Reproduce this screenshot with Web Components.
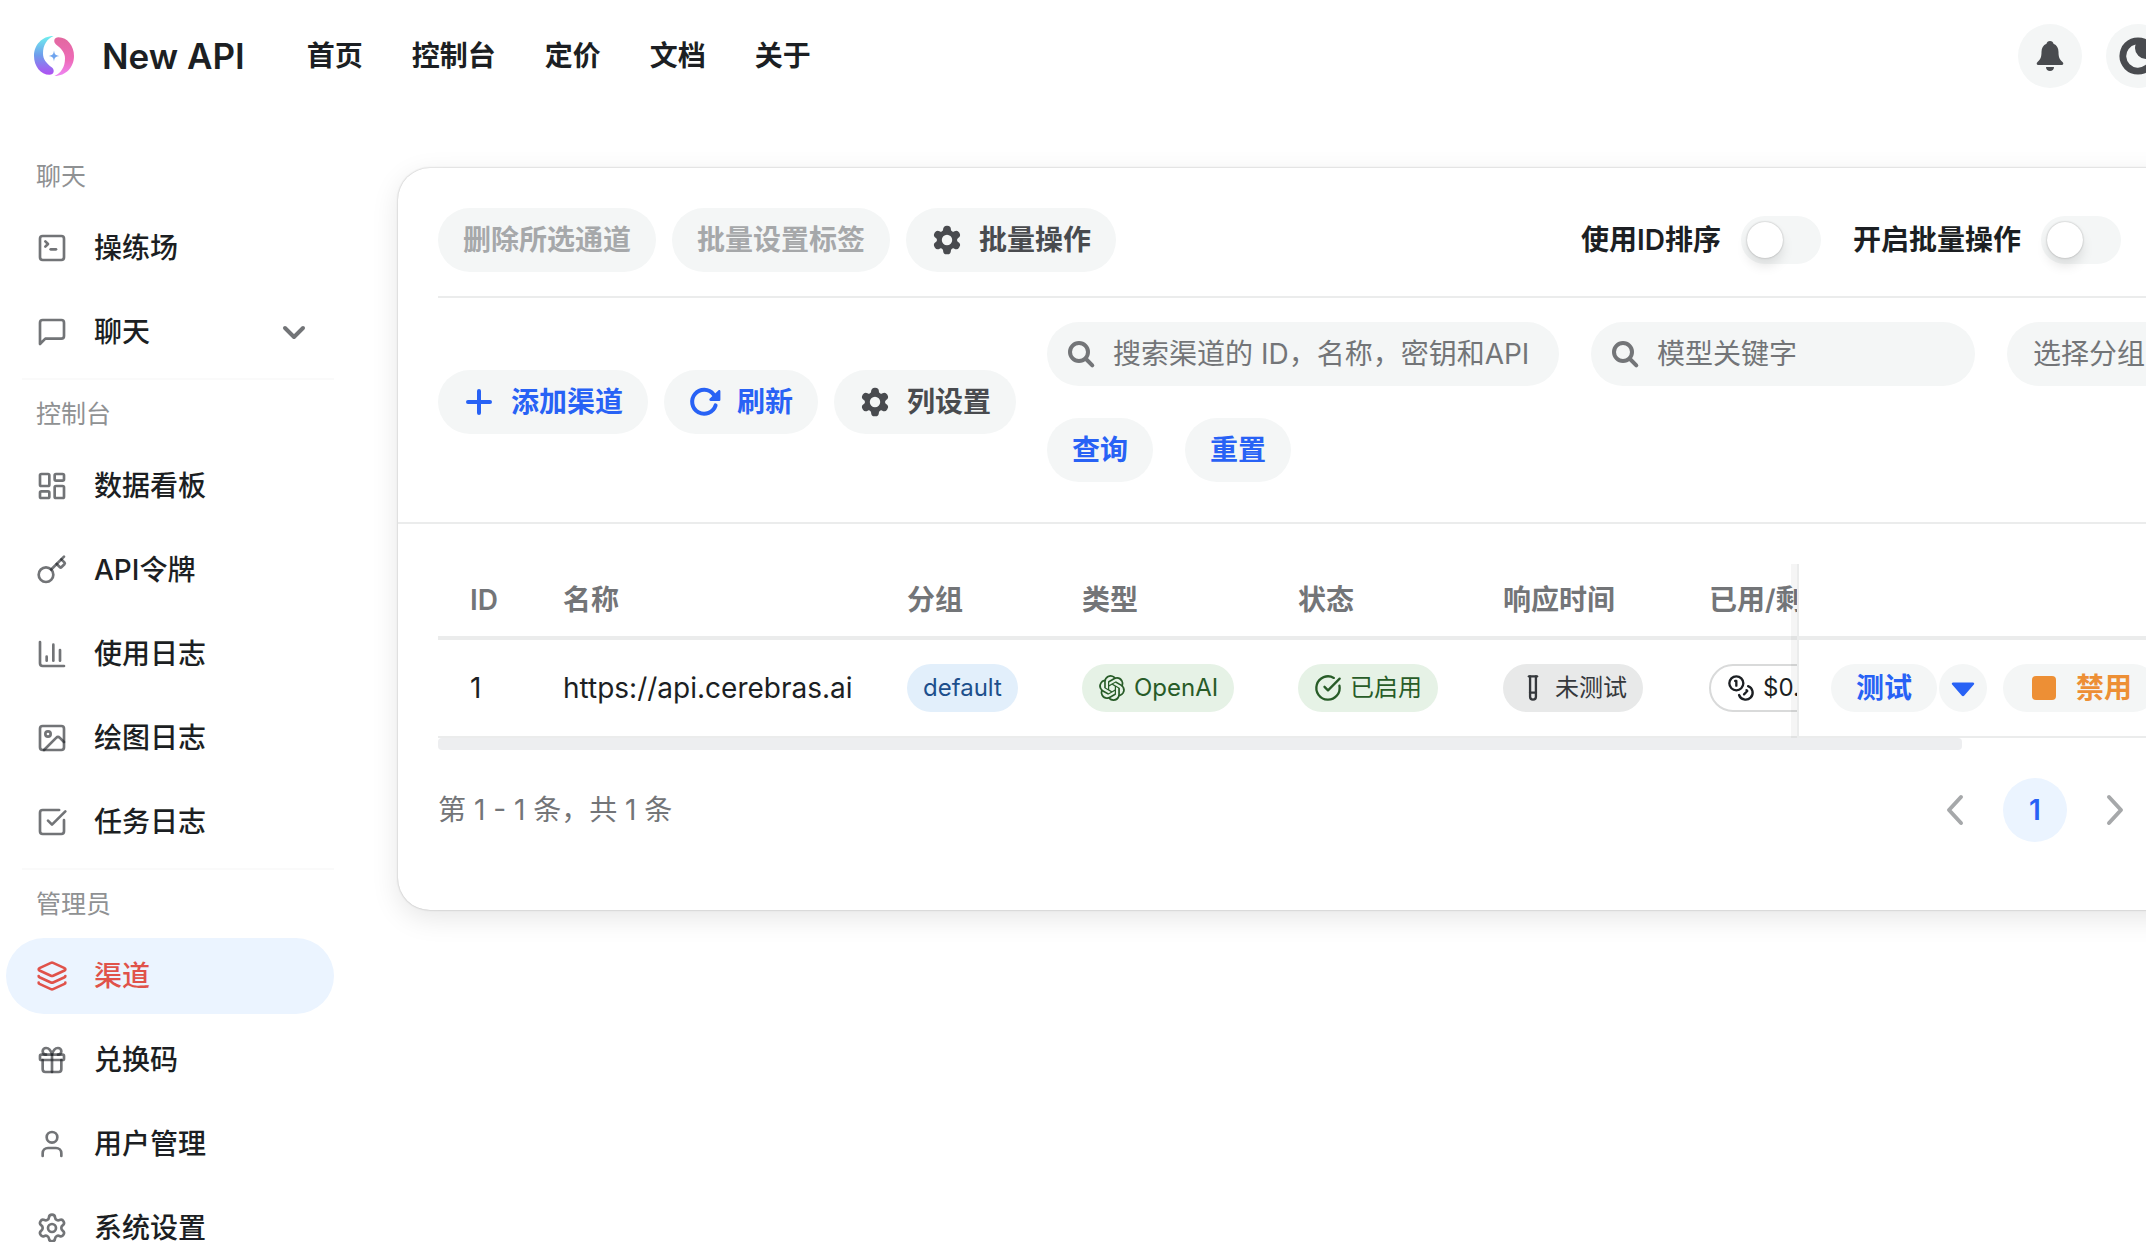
<!DOCTYPE html>
<html lang="zh-CN">
<head>
<meta charset="utf-8">
<title>New API</title>
<style>
html, body {
	margin: 0;
	height: 100%;
	overflow: hidden;
}
body {
	--text-0: #1c1f23;
	--text-1: #494b4f;
	--text-2: #737578;
	--text-3: #a6a8aa;
	--primary: #2862f5;
	--primary-light: #ebf4ff;
	--danger: #e0524a;
	--warning: #ed8f35;
	--fill: #f4f6f6;
	--line: #ebecec;
	font-family: Inter, "Noto Sans CJK SC", sans-serif;
	font-size: 28px;
	line-height: 40px;
	color: var(--text-0);
	background: #fff;
}
</style>
</head>
<body>
<app-root></app-root>

<script>
// ---------- icons ----------
const line = (body) => `<svg viewBox="0 0 24 24" fill="none" stroke="currentColor" stroke-width="2" stroke-linecap="round" stroke-linejoin="round">${body}</svg>`
const solid = (body, box = "0 0 32 32") => `<svg viewBox="${box}" fill="currentColor">${body}</svg>`

const ICONS = {
  terminal: line('<path d="m7 11 2-2-2-2"/><path d="M11 13h4"/><rect x="3" y="3" width="18" height="18" rx="2"/>'),
  message: line('<path d="M21 15a2 2 0 0 1-2 2H7l-4 4V5a2 2 0 0 1 2-2h14a2 2 0 0 1 2 2z"/>'),
  dashboard: line('<rect x="3" y="3" width="7" height="9" rx="1"/><rect x="14" y="3" width="7" height="5" rx="1"/><rect x="14" y="12" width="7" height="9" rx="1"/><rect x="3" y="16" width="7" height="5" rx="1"/>'),
  key: line('<path d="m15.5 7.5 2.3 2.3a1 1 0 0 0 1.4 0l2.1-2.1a1 1 0 0 0 0-1.4L19 4"/><path d="m21 2-9.6 9.6"/><circle cx="7.5" cy="15.5" r="5.5"/>'),
  chart: line('<path d="M3 3v16a2 2 0 0 0 2 2h16"/><path d="M18 17V9"/><path d="M13 17V5"/><path d="M8 17v-3"/>'),
  image: line('<rect x="3" y="3" width="18" height="18" rx="2"/><circle cx="9" cy="9" r="2"/><path d="m21 15-3.086-3.086a2 2 0 0 0-2.828 0L6 21"/>'),
  task: line('<path d="M21 10.656V19a2 2 0 0 1-2 2H5a2 2 0 0 1-2-2V5a2 2 0 0 1 2-2h12.344"/><path d="m9 11 3 3L22 4"/>'),
  layers: line('<path d="M12.83 2.18a2 2 0 0 0-1.66 0L2.6 6.08a1 1 0 0 0 0 1.83l8.58 3.91a2 2 0 0 0 1.66 0l8.58-3.9a1 1 0 0 0 0-1.83z"/><path d="M2 12a1 1 0 0 0 .58.91l8.6 3.91a2 2 0 0 0 1.65 0l8.58-3.9A1 1 0 0 0 22 12"/><path d="M2 17a1 1 0 0 0 .58.91l8.6 3.91a2 2 0 0 0 1.65 0l8.58-3.9A1 1 0 0 0 22 17"/>'),
  gift: line('<rect x="3" y="8" width="18" height="4" rx="1"/><path d="M12 8v13"/><path d="M19 12v7a2 2 0 0 1-2 2H7a2 2 0 0 1-2-2v-7"/><path d="M7.5 8a2.5 2.5 0 0 1 0-5A4.8 8 0 0 1 12 8a4.8 8 0 0 1 4.5-5 2.5 2.5 0 0 1 0 5"/>'),
  user: line('<path d="M19 21v-2a4 4 0 0 0-4-4H9a4 4 0 0 0-4 4v2"/><circle cx="12" cy="7" r="4"/>'),
  settings: line('<path d="M9.671 4.136a2.34 2.34 0 0 1 4.659 0 2.34 2.34 0 0 0 3.319 1.915 2.34 2.34 0 0 1 2.33 4.033 2.34 2.34 0 0 0 0 3.831 2.34 2.34 0 0 1-2.33 4.033 2.34 2.34 0 0 0-3.319 1.915 2.34 2.34 0 0 1-4.659 0 2.34 2.34 0 0 0-3.32-1.915 2.34 2.34 0 0 1-2.33-4.033 2.34 2.34 0 0 0 0-3.831A2.34 2.34 0 0 1 6.35 6.051a2.34 2.34 0 0 0 3.319-1.915"/><circle cx="12" cy="12" r="3"/>'),
  checked: line('<path d="M21.801 10A10 10 0 1 1 17 3.335"/><path d="m9 11 3 3L22 4"/>'),
  tube: line('<path d="M14.5 2v17.5c0 1.4-1.1 2.5-2.5 2.5s-2.5-1.1-2.5-2.5V2"/><path d="M8.5 2h7"/><path d="M14.5 16h-5"/>'),
  coins: line('<circle cx="8" cy="8" r="6"/><path d="M18.09 10.37A6 6 0 1 1 10.34 18"/><path d="M7 6h1v4"/><path d="m16.71 13.88.7.71-2.82 2.82"/>'),
  openai: solid('<path d="M22.2819 9.8211a5.9847 5.9847 0 0 0-.5157-4.9108 6.0462 6.0462 0 0 0-6.5098-2.9A6.0651 6.0651 0 0 0 4.9807 4.1818a5.9847 5.9847 0 0 0-3.9977 2.9 6.0462 6.0462 0 0 0 .7427 7.0966 5.98 5.98 0 0 0 .511 4.9107 6.051 6.051 0 0 0 6.5146 2.9001A5.9847 5.9847 0 0 0 13.2599 24a6.0557 6.0557 0 0 0 5.7718-4.2058 5.9894 5.9894 0 0 0 3.9977-2.9001 6.0557 6.0557 0 0 0-.7475-7.0729zm-9.022 12.6081a4.4755 4.4755 0 0 1-2.8764-1.0408l.1419-.0804 4.7783-2.7582a.7948.7948 0 0 0 .3927-.6813v-6.7369l2.02 1.1686a.071.071 0 0 1 .038.052v5.5826a4.504 4.504 0 0 1-4.4945 4.4944zm-9.6607-4.1254a4.4708 4.4708 0 0 1-.5346-3.0137l.142.0852 4.783 2.7582a.7712.7712 0 0 0 .7806 0l5.8428-3.3685v2.3324a.0804.0804 0 0 1-.0332.0615L9.74 19.9502a4.4992 4.4992 0 0 1-6.1408-1.6464zM2.3408 7.8956a4.485 4.485 0 0 1 2.3655-1.9728V11.6a.7664.7664 0 0 0 .3879.6765l5.8144 3.3543-2.0201 1.1685a.0757.0757 0 0 1-.071 0l-4.8303-2.7865A4.504 4.504 0 0 1 2.3408 7.872zm16.5963 3.8558L13.1038 8.364 15.1192 7.2a.0757.0757 0 0 1 .071 0l4.8303 2.7913a4.4944 4.4944 0 0 1-.6765 8.1042v-5.6772a.79.79 0 0 0-.407-.667zm2.0107-3.0231l-.142-.0852-4.7735-2.7818a.7759.7759 0 0 0-.7854 0L9.409 9.2297V6.8974a.0662.0662 0 0 1 .0284-.0615l4.8303-2.7866a4.4992 4.4992 0 0 1 6.6802 4.66zM8.3065 12.863l-2.02-1.1638a.0804.0804 0 0 1-.038-.0567V6.0742a4.4992 4.4992 0 0 1 7.3757-3.4537l-.142.0805L8.704 5.459a.7948.7948 0 0 0-.3927.6813zm1.0976-2.3654l2.602-1.4998 2.6069 1.4998v2.9994l-2.5974 1.4997-2.6067-1.4997Z"/>', "-1 -1 26 26"),
  gear: solid('<path fill-rule="evenodd" stroke="currentColor" stroke-width="1.4" stroke-linejoin="round" d="M12.22 2h-.44a2 2 0 0 0-2 2v.18a2 2 0 0 1-1 1.73l-.43.25a2 2 0 0 1-2 0l-.15-.08a2 2 0 0 0-2.73.73l-.22.38a2 2 0 0 0 .73 2.73l.15.1a2 2 0 0 1 1 1.72v.51a2 2 0 0 1-1 1.74l-.15.09a2 2 0 0 0-.73 2.73l.22.38a2 2 0 0 0 2.73.73l.15-.08a2 2 0 0 1 2 0l.43.25a2 2 0 0 1 1 1.73V20a2 2 0 0 0 2 2h.44a2 2 0 0 0 2-2v-.18a2 2 0 0 1 1-1.73l.43-.25a2 2 0 0 1 2 0l.15.08a2 2 0 0 0 2.73-.73l.22-.39a2 2 0 0 0-.73-2.73l-.15-.08a2 2 0 0 1-1-1.74v-.5a2 2 0 0 1 1-1.74l.15-.09a2 2 0 0 0 .73-2.73l-.22-.38a2 2 0 0 0-2.73-.73l-.15.08a2 2 0 0 1-2 0l-.43-.25a2 2 0 0 1-1-1.73V4a2 2 0 0 0-2-2zM12 7.4a4.6 4.6 0 1 1 0 9.2 4.6 4.6 0 0 1 0-9.2z"/>', "0 0 24 24"),
  plus: solid('<path d="M16 3a2 2 0 0 1 2 2v9h9a2 2 0 0 1 0 4h-9v9a2 2 0 0 1-4 0v-9H5a2 2 0 0 1 0-4h9V5a2 2 0 0 1 2-2z"/>'),
  refresh: solid('<path d="M26.6 19.4A12 12 0 1 1 24.6 8.4" fill="none" stroke="currentColor" stroke-width="4" stroke-linecap="round"/><path d="M31.4 5.2v8.6a1.2 1.2 0 0 1-1.2 1.2h-8.4c-1.4 0-2-1.6-1-2.5l8.5-8.1c.8-.8 2.1-.3 2.1.8z"/>'),
  search: solid('<circle cx="14" cy="14" r="9" fill="none" stroke="currentColor" stroke-width="4"/><path d="m21 21 6.3 6.3" fill="none" stroke="currentColor" stroke-width="4" stroke-linecap="round"/>'),
  down: solid('<path d="m7 12 9 9 9-9" fill="none" stroke="currentColor" stroke-width="4" stroke-linecap="round" stroke-linejoin="round"/>'),
  left: solid('<path d="M22 3 10 16l12 13" fill="none" stroke="currentColor" stroke-width="4" stroke-linecap="round" stroke-linejoin="round"/>'),
  right: solid('<path d="m10 3 12 13-12 13" fill="none" stroke="currentColor" stroke-width="4" stroke-linecap="round" stroke-linejoin="round"/>'),
  caret: solid('<path d="M5.4 10h21.2c1.2 0 1.8 1.4 1 2.3L17.4 24c-.8.9-2 .9-2.8 0L4.4 12.3c-.8-.9-.2-2.3 1-2.3z"/>'),
  stop: solid('<rect x="4" y="4" width="24" height="24" rx="4"/>'),
  bell: solid('<path d="M16 1c2 0 3.2 1.2 3.5 2.8 3.4 1.4 5 4.4 5 8.200 0 5 1 7.500 4 10 1.400 1.200.9 3-.8 3H4.300c-1.700 0-2.200-1.800-.8-3 3-2.500 4-5 4-10 0-3.800 1.600-6.800 5-8.200C12.800 2.200 14 1 16 1zM12 27h8c0 2.400-1.700 4-4 4s-4-1.600-4-4z"/>'),
  moon: solid('<path fill-rule="evenodd" d="M20 1.400a18.600 18.600 0 1 1 0 37.200 18.600 18.600 0 0 1 0-37.200zM17.600 8.600a11.700 11.700 0 1 0 13.800 13.800A11 11 0 0 1 17.600 8.600z"/>', "0 0 40 40"),
  logo: `<svg viewBox="0 0 40 40">
    <defs>
      <linearGradient id="cool" x1="0" y1="0" x2="0" y2="1"><stop offset="0" stop-color="#6ff0ee"/><stop offset=".5" stop-color="#6f9cec"/><stop offset="1" stop-color="#b04ff2"/></linearGradient>
      <linearGradient id="warm" x1="0" y1="0" x2="0" y2="1"><stop offset="0" stop-color="#e2689f"/><stop offset=".6" stop-color="#ee6bb8"/><stop offset="1" stop-color="#ee86f5"/></linearGradient>
    </defs>
    <path fill="url(#cool)" d="M19.500 0C8 0 0 9 0 20c0 10 6.500 18.800 15.500 18.800 4.500 0 5.500-4.500 2.500-7.200C12 27 9 23 9 17.500 9 9 13 3 19.500 0z"/>
    <path fill="url(#warm)" d="M20.500 40C32 40 40 31 40 20 40 10 33.500 1.200 24.500 1.200c-4.500 0-5.500 4.500-2.500 7.200 6 4.600 9 8.600 9 14.100 0 8.500-4 14.500-10.500 17.500z"/>
    <path fill="#6fa4ee" d="M20 14.600c.6 4 1.400 4.800 5.400 5.400-4 .6-4.800 1.400-5.400 5.400-.6-4-1.400-4.800-5.400-5.400 4-.6 4.800-1.400 5.400-5.400z"/>
  </svg>`,
}

class BaseElement extends HTMLElement {
  constructor() {
    super()
    this.attachShadow({mode:'open'})
  }
  connectedCallback() {
    const template = document.createElement("template")
    template.innerHTML = `<style>${this.getStyles()}</style>${this.getTemplate()}`
    this.shadowRoot.replaceChildren(template.content.cloneNode(true))
  }
}

class AppIcon extends BaseElement {
  getTemplate() {
    return ICONS[this.getAttribute("name")] || ""
  }
  getStyles() {
    return `
:host{
	display:block;
	flex:none;
	width:var(--icon-size,32px);
	height:var(--icon-size,32px);
}
svg{
	display:block;
	width:100%;
	height:100%;
	overflow:visible;
}
    `
  }
}
customElements.define("app-icon",AppIcon)

// ---------- controls ----------
class UiButton extends BaseElement {
  getTemplate() {
    const icon = this.getAttribute("icon")
    const label = this.getAttribute("label")
    return `
<button type="button" ${this.hasAttribute("disabled") ? "disabled" : ""} ${label ? `aria-label="${label}"` : ""}>
	${icon ? `<app-icon name="${icon}"></app-icon>` : ""}
	<slot></slot>
</button>
    `
  }
  getStyles() {
    return `
:host{
	display:block;
	flex:none;
	color:var(--text-1);
}
:host([kind="primary"]){ color:var(--primary); }
:host([kind="warning"]){ color:var(--warning); }
:host([disabled]){ color:var(--text-3); }
button{
	display:flex;
	align-items:center;
	justify-content:center;
	gap:16px;
	height:64px;
	padding:0 25px;
	border:none;
	border-radius:32px;
	background:var(--fill);
	color:inherit;
	font:inherit;
	font-weight:600;
	white-space:nowrap;
}
:host([size="small"]) button{
	height:48px;
}
:host([shape="round"]) button{
	width:64px;
	padding:0;
}
:host([shape="round"][size="small"]) button{
	width:48px;
}
:host([shape="round"]) slot{ display:none; }
:host([kind="plain"]) button{
	background:none;
	color:var(--text-3);
}
    `
  }
}
customElements.define("ui-button",UiButton)

class UiSwitch extends BaseElement {
  getTemplate() {
    return `
<label for="toggle"><slot></slot></label>
<input id="toggle" type="checkbox" role="switch">
    `
  }
  getStyles() {
    return `
:host{
	display:flex;
	align-items:center;
	gap:20px;
	font-weight:600;
	white-space:nowrap;
}
input{
	appearance:none;
	display:flex;
	align-items:center;
	width:80px;
	height:48px;
	margin:0;
	padding:0 6px;
	box-sizing:border-box;
	border-radius:24px;
	background:var(--fill);
}
input::before{
	content:"";
	width:36px;
	height:36px;
	border-radius:50%;
	background:#fff;
	box-shadow:0 0 2px rgba(0,0,0,.3), 0 8px 12px rgba(0,0,0,.1);
}
input:checked{
	justify-content:flex-end;
	background:var(--primary);
}
    `
  }
}
customElements.define("ui-switch",UiSwitch)

class SearchField extends BaseElement {
  getTemplate() {
    const hint = this.getAttribute("hint")
    return `
<label for="field"><app-icon name="search"></app-icon></label>
<input id="field" type="text" placeholder="${hint}" aria-label="${hint}">
    `
  }
  getStyles() {
    return `
:host{
	display:flex;
	align-items:center;
	gap:16px;
	box-sizing:border-box;
	height:64px;
	padding:0 18px;
	border-radius:32px;
	background:var(--fill);
	color:var(--text-2);
}
input{
	flex:1;
	min-width:0;
	padding:0;
	border:none;
	outline:none;
	background:none;
	font:inherit;
	color:var(--text-0);
}
input::placeholder{
	color:var(--text-2);
	opacity:1;
}
    `
  }
}
customElements.define("search-field",SearchField)

class UiTag extends BaseElement {
  getTemplate() {
    const icon = this.getAttribute("icon")
    return `${icon ? `<app-icon name="${icon}"></app-icon>` : ""}<slot></slot>`
  }
  getStyles() {
    return `
:host{
	--icon-size:28px;
	display:inline-flex;
	align-items:center;
	gap:8px;
	box-sizing:border-box;
	height:48px;
	padding:0 16px;
	border-radius:24px;
	font-size:24px;
	line-height:32px;
	vertical-align:top;
	white-space:nowrap;
}
:host([color="blue"]){ background:#e2effb; color:#1d4f8c; }
:host([color="green"]){ background:#e6f2e6; color:#285c28; }
:host([color="grey"]){ background:#e8e9e9; color:#35383c; }
:host([color="white"]){ background:#fff; border:2px solid #d9dada; color:var(--text-0); }
    `
  }
}
customElements.define("ui-tag",UiTag)

// ---------- header ----------
class AppHeader extends BaseElement {
  getTemplate() {
    const links = ["首页", "控制台", "定价", "文档", "关于"]
    return `
<a class="brand" href="#"><app-icon name="logo"></app-icon><span>New API</span></a>
<nav>${links.map(text => `<a href="#">${text}</a>`).join("")}</nav>
<div class="actions">
	<ui-button shape="round" icon="bell" label="系统公告"></ui-button>
	<ui-button shape="round" icon="moon" label="切换主题" class="theme"></ui-button>
</div>
    `
  }
  getStyles() {
    return `
:host{
	display:flex;
	align-items:center;
	height:112px;
	padding:0 34px;
}
a{
	color:inherit;
	text-decoration:none;
}
.brand{
	--icon-size:40px;
	display:flex;
	align-items:center;
	gap:28px;
	font-size:35px;
	font-weight:600;
}
nav{
	display:flex;
	gap:49px;
	margin-left:62px;
	font-weight:600;
}
.actions{
	display:flex;
	gap:24px;
	margin-left:auto;
	margin-right:293px;
}
.theme{ --icon-size:40px; }
    `
  }
}
customElements.define("app-header",AppHeader)

// ---------- sidebar ----------
class SideItem extends BaseElement {
  getTemplate() {
    return `
<a href="#" ${this.hasAttribute("active") ? 'aria-current="page"' : ""}>
	<app-icon name="${this.getAttribute("icon")}"></app-icon>
	<span><slot></slot></span>
	${this.hasAttribute("expandable") ? '<app-icon class="arrow" name="down"></app-icon>' : ""}
</a>
    `
  }
  getStyles() {
    return `
:host{
	display:block;
	margin-bottom:8px;
	color:var(--text-0);
}
:host([active]){ color:var(--danger); }
a{
	display:flex;
	align-items:center;
	gap:26px;
	height:76px;
	padding:0 24px 0 30px;
	border-radius:38px;
	color:inherit;
	font-weight:500;
	text-decoration:none;
}
app-icon{ color:rgba(28,31,35,.62); }
:host([active]) a{ background:var(--primary-light); }
:host([active]) app-icon{ color:inherit; }
.arrow{ margin-left:auto; }
    `
  }
}
customElements.define("side-item",SideItem)

class SideGroup extends BaseElement {
  getTemplate() {
    return `<h2>${this.getAttribute("title")}</h2><slot></slot>`
  }
  getStyles() {
    return `
:host{ display:block; }
:host(:not(:first-of-type))::before{
	content:"";
	display:block;
	height:2px;
	margin-left:16px;
	background:#fafafa;
}
h2{
	margin:0;
	padding:18px 0 18px 30px;
	font-size:25px;
	line-height:32px;
	font-weight:400;
	color:#8f9193;
}
    `
  }
}
customElements.define("side-group",SideGroup)

class SideBar extends BaseElement {
  getTemplate() {
    return `
<side-group title="聊天">
	<side-item icon="terminal">操练场</side-item>
	<side-item icon="message" expandable>聊天</side-item>
</side-group>
<side-group title="控制台">
	<side-item icon="dashboard">数据看板</side-item>
	<side-item icon="key">API令牌</side-item>
	<side-item icon="chart">使用日志</side-item>
	<side-item icon="image">绘图日志</side-item>
	<side-item icon="task">任务日志</side-item>
</side-group>
<side-group title="管理员">
	<side-item icon="layers" active>渠道</side-item>
	<side-item icon="gift">兑换码</side-item>
	<side-item icon="user">用户管理</side-item>
	<side-item icon="settings">系统设置</side-item>
</side-group>
    `
  }
  getStyles() {
    return `
:host{
	display:block;
	flex:none;
	box-sizing:border-box;
	width:358px;
	padding:30px 24px 0 6px;
}
    `
  }
}
customElements.define("side-bar",SideBar)

// ---------- channel page ----------
class ChannelToolbar extends BaseElement {
  getTemplate() {
    return `
<div class="row batch">
	<ui-button disabled>删除所选通道</ui-button>
	<ui-button disabled>批量设置标签</ui-button>
	<ui-button icon="gear">批量操作</ui-button>
	<div class="switches">
		<ui-switch>使用ID排序</ui-switch>
		<ui-switch>开启批量操作</ui-switch>
	</div>
</div>
<div class="row query">
	<ui-button kind="primary" icon="plus">添加渠道</ui-button>
	<ui-button kind="primary" icon="refresh">刷新</ui-button>
	<ui-button icon="gear">列设置</ui-button>
	<form>
		<search-field class="wide" hint="搜索渠道的 ID，名称，密钥和API"></search-field>
		<search-field hint="模型关键字"></search-field>
		<select aria-label="选择分组"><option>选择分组</option></select>
		<ui-button kind="primary">查询</ui-button>
		<ui-button kind="primary">重置</ui-button>
	</form>
</div>
    `
  }
  getStyles() {
    return `
:host{
	display:block;
	padding:40px;
	border-bottom:2px solid var(--line);
}
.row{
	display:flex;
	align-items:center;
	gap:16px;
}
.batch{
	padding-bottom:24px;
	border-bottom:2px solid var(--line);
}
.query{ padding-top:24px; }
.switches{
	display:flex;
	gap:32px;
	margin-left:auto;
	margin-right:296px;
}
form{
	flex:1;
	display:flex;
	flex-wrap:wrap;
	gap:32px;
	margin-left:15px;
}
search-field{ width:384px; }
.wide{ width:512px; }
select{
	appearance:none;
	width:320px;
	height:64px;
	padding:0 26px;
	border:none;
	border-radius:32px;
	background:var(--fill);
	color:var(--text-2);
	font:inherit;
}
    `
  }
}
customElements.define("channel-toolbar",ChannelToolbar)

class ChannelTable extends BaseElement {
  getTemplate() {
    return `
<div class="scroller">
<table>
	<colgroup>
		<col style="width:93px"><col style="width:344px"><col style="width:175px"><col style="width:216px">
		<col style="width:205px"><col style="width:206px"><col><col style="width:620px">
	</colgroup>
	<thead>
		<tr><th>ID</th><th>名称</th><th>分组</th><th>类型</th><th>状态</th><th>响应时间</th><th>已用/剩余</th><th class="fixed"></th></tr>
	</thead>
	<tbody>
		<tr>
			<td>1</td>
			<td>https://api.cerebras.ai</td>
			<td><ui-tag color="blue">default</ui-tag></td>
			<td><ui-tag color="green" icon="openai">OpenAI</ui-tag></td>
			<td><ui-tag color="green" icon="checked">已启用</ui-tag></td>
			<td><ui-tag color="grey" icon="tube">未测试</ui-tag></td>
			<td><ui-tag color="white" icon="coins">$0.00</ui-tag></td>
			<td class="fixed">
				<div class="actions">
					<div class="split">
						<ui-button kind="primary" size="small">测试</ui-button>
						<ui-button kind="primary" size="small" shape="round" icon="caret" label="选择测试模型" class="caret"></ui-button>
					</div>
					<ui-button kind="warning" size="small" icon="stop">禁用</ui-button>
				</div>
			</td>
		</tr>
	</tbody>
</table>
</div>
<div class="thumb"></div>
    `
  }
  getStyles() {
    return `
:host{ display:block; }
.scroller{ overflow:hidden; }
table{
	table-layout:fixed;
	width:130%;
	border-collapse:separate;
	border-spacing:0;
	text-align:left;
}
th{
	padding:16px 32px;
	border-bottom:4px solid var(--line);
	font-weight:600;
	color:var(--text-2);
	height:40px;
	white-space:nowrap;
}
td{
	padding:24px 32px;
	border-bottom:2px solid var(--line);
	height:48px;
	white-space:nowrap;
}
.fixed{
	position:sticky;
	right:0;
	border-left:2px solid var(--line);
	background:#fff;
}
.fixed::before{
	content:"";
	position:absolute;
	top:0;
	bottom:-4px;
	left:-8px;
	width:6px;
	background:rgba(0,0,0,.04);
}
td.fixed::before{ bottom:-2px; }
.actions, .split{
	display:flex;
	gap:16px;
}
.split{ gap:2px; }
.caret{ --icon-size:30px; }
.thumb{
	width:77%;
	height:12px;
	border-radius:4px;
	background:#edeef0;
}
    `
  }
}
customElements.define("channel-table",ChannelTable)

class ChannelPager extends BaseElement {
  getTemplate() {
    return `
<span>第 1 - 1 条，共 1 条</span>
<nav aria-label="分页">
	<ui-button shape="round" kind="plain" icon="left" label="上一页"></ui-button>
	<button type="button" aria-current="page">1</button>
	<ui-button shape="round" kind="plain" icon="right" label="下一页"></ui-button>
</nav>
    `
  }
  getStyles() {
    return `
:host{
	display:flex;
	align-items:center;
	justify-content:space-between;
	padding:28px 0;
	color:var(--text-2);
}
nav{
	display:flex;
	gap:16px;
	margin-right:270px;
}
button{
	width:64px;
	height:64px;
	padding:0;
	border:none;
	border-radius:50%;
	background:var(--primary-light);
	color:var(--primary);
	font:inherit;
	font-weight:600;
}
    `
  }
}
customElements.define("channel-pager",ChannelPager)

class ChannelCard extends BaseElement {
  getTemplate() {
    return `
<channel-toolbar></channel-toolbar>
<div class="body">
	<channel-table></channel-table>
	<channel-pager></channel-pager>
</div>
    `
  }
  getStyles() {
    return `
:host{
	display:block;
	border-radius:32px;
	background:#fff;
	box-shadow:0 0 2px rgba(0,0,0,.3), 0 8px 28px rgba(0,0,0,.1);
}
.body{ padding:40px; }
    `
  }
}
customElements.define("channel-card",ChannelCard)

class AppRoot extends BaseElement {
  getTemplate() {
    return `
<app-header></app-header>
<div class="layout">
	<side-bar></side-bar>
	<main><channel-card></channel-card></main>
</div>
    `
  }
  getStyles() {
    // the console is wider than the window and runs off its right side
    return `
:host{
	display:block;
	width:calc(100% + 351px);
}
.layout{
	display:flex;
	align-items:flex-start;
}
main{
	flex:1;
	min-width:0;
	padding:56px 40px 40px;
}
    `
  }
}
customElements.define("app-root",AppRoot)
</script>
</body>
</html>
